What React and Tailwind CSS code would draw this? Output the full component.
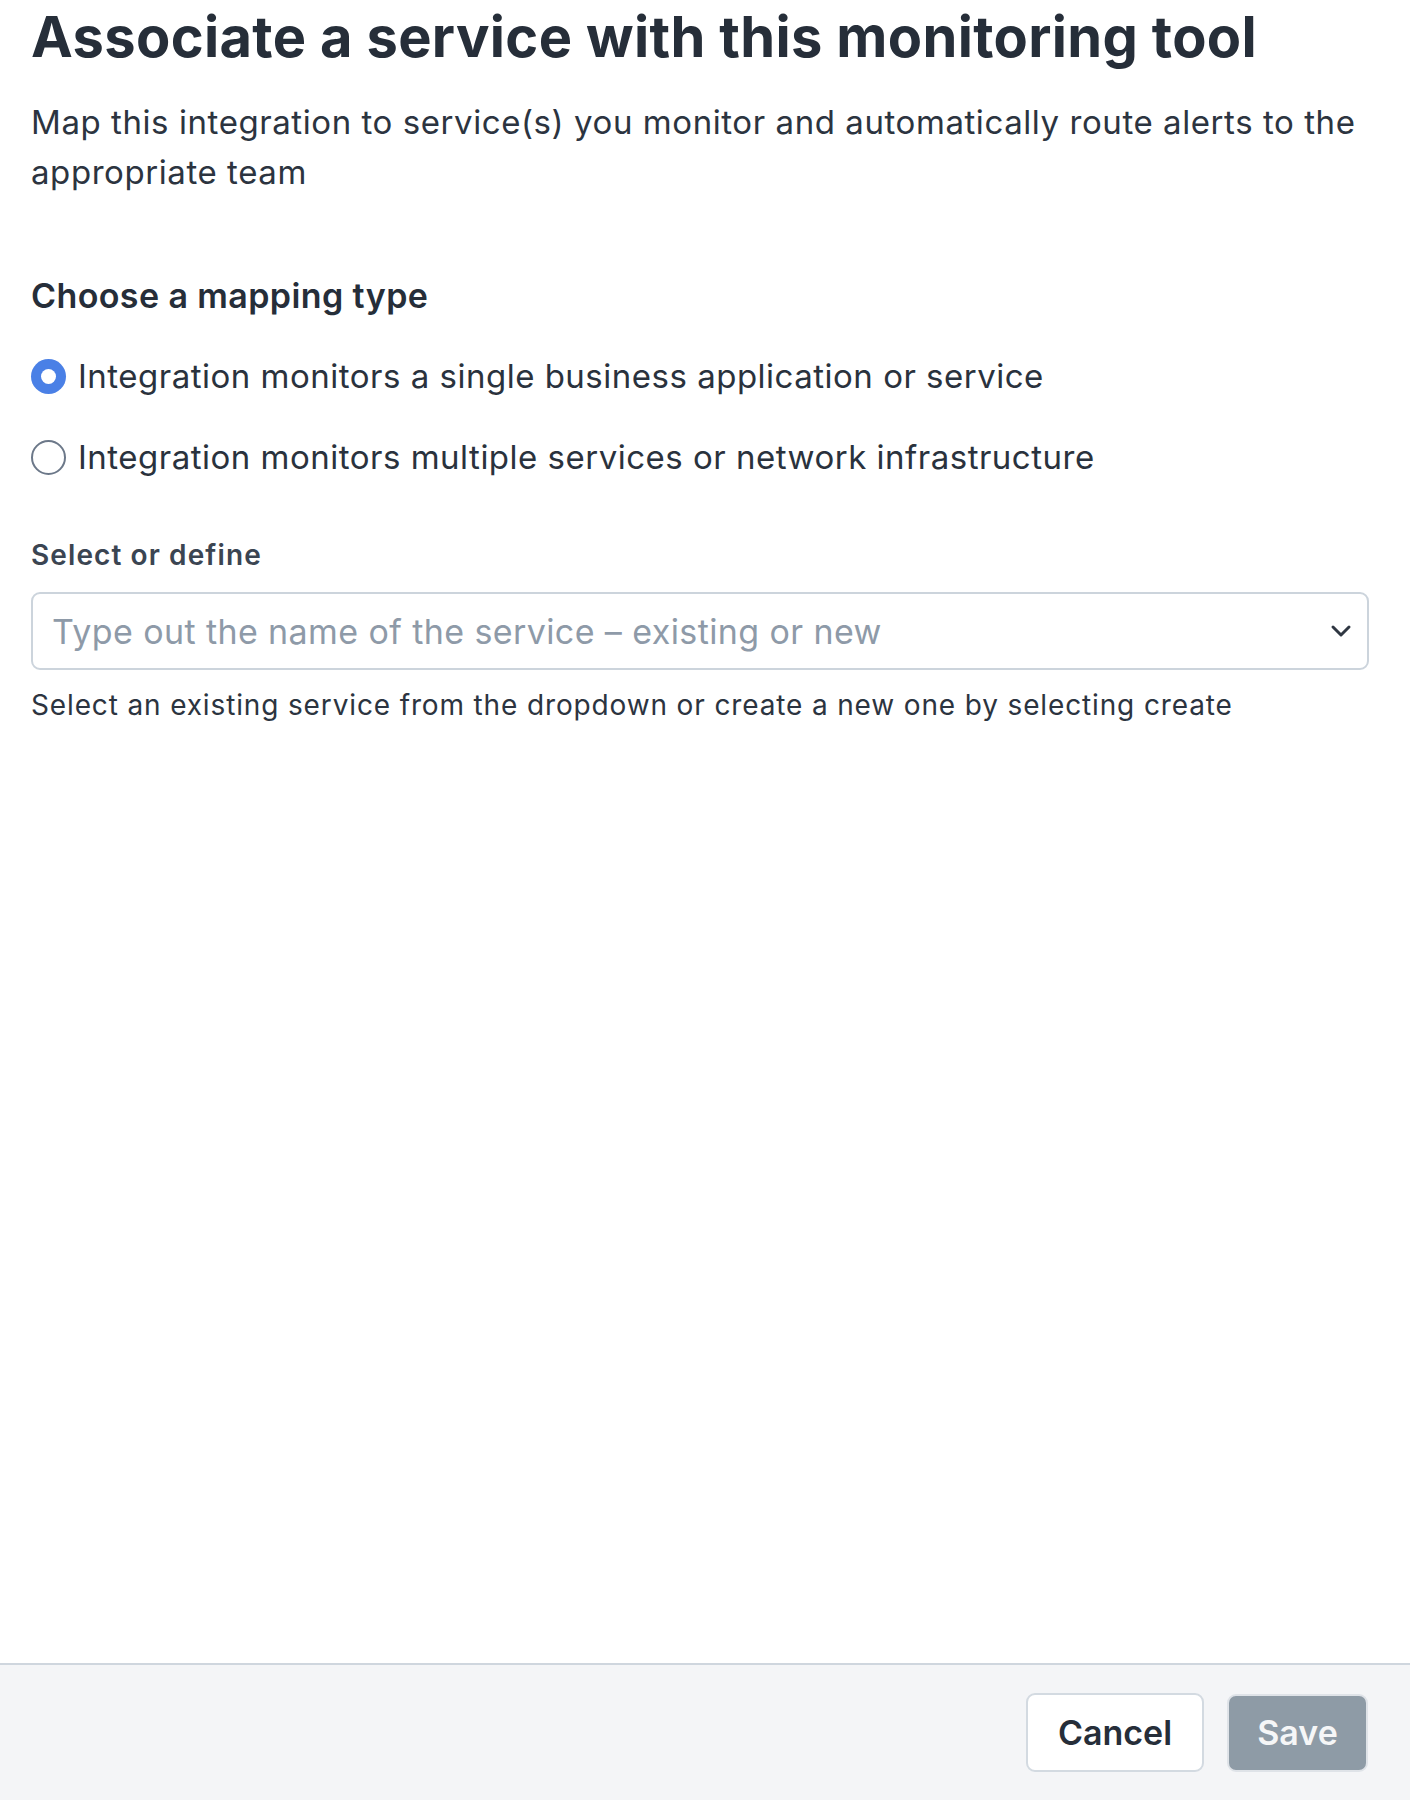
import React, { useState } from 'react';

const OPTIONS = [
  { key: 'single', label: 'Integration monitors a single business application or service' },
  { key: 'multiple', label: 'Integration monitors multiple services or network infrastructure' },
];

function Radio({ checked }) {
  return checked ? (
    <span className="w-[35px] h-[35px] rounded-full bg-[#4a80e6] flex items-center justify-center flex-shrink-0">
      <span className="w-[15px] h-[15px] rounded-full bg-white" />
    </span>
  ) : (
    <span className="w-[35px] h-[35px] rounded-full border-2 border-[#6c7889] bg-white flex-shrink-0" />
  );
}

export default function App() {
  const [mapping, setMapping] = useState('single');

  return (
    <div className="w-full h-[1800px] flex flex-col bg-white text-[#2a323d]" style={{ fontFamily: 'Inter, "Noto Sans", sans-serif' }}>
      <div className="flex-1 pl-[31px] pr-[41px] pt-[4px]">
        <h1 className="text-[56px] leading-[66px] font-bold text-[#262e39] tracking-[0.35px]">
          Associate a service with this monitoring tool
        </h1>
        <p className="mt-[27px] text-[33px] leading-[50px] text-[#2c3440] tracking-[0.57px]">
          Map this integration to service(s) you monitor and automatically route alerts to the appropriate team
        </p>

        <h2 className="mt-[79px] text-[34px] leading-[40px] font-semibold text-[#262e39] tracking-[0.4px]">
          Choose a mapping type
        </h2>

        <div className="mt-[40px] flex flex-col gap-[41px]">
          {OPTIONS.map(opt => (
            <label
              key={opt.key}
              className="flex items-center gap-[12px] h-[40px] cursor-pointer"
              onClick={() => setMapping(opt.key)}
            >
              <Radio checked={mapping === opt.key} />
              <span className="text-[33px] leading-[40px] text-[#2a323d] tracking-[0.5px]">{opt.label}</span>
            </label>
          ))}
        </div>

        <div className="mt-[60px] text-[28px] leading-[36px] font-semibold text-[#3b4552] tracking-[1.1px]">
          Select or define
        </div>
        <div className="mt-[19px] h-[78px] border-2 border-[#ccd4dc] rounded-[9px] flex items-center pl-[19px] pr-[15px]">
          <span className="flex-1 text-[34px] text-[#8e9aa8] tracking-[0.4px]">
            Type out the name of the service – existing or new
          </span>
          <svg width="22" height="14" viewBox="0 0 22 14" fill="none" stroke="#2f3742" strokeWidth="3" strokeLinecap="round" strokeLinejoin="round">
            <path d="M3 3l8 8 8-8" />
          </svg>
        </div>
        <p className="mt-[17px] text-[28px] leading-[36px] text-[#2c3440] tracking-[0.86px]">
          Select an existing service from the dropdown or create a new one by selecting create
        </p>
      </div>

      <div className="h-[137px] border-t-2 border-[#cfd6de] bg-[#f4f5f7] flex items-center justify-end gap-[23px] pr-[42px]">
        <button className="w-[178px] h-[79px] rounded-[9px] bg-white border-2 border-[#d3dae1] text-[34px] font-semibold text-[#262e39]">
          Cancel
        </button>
        <button className="w-[141px] h-[78px] rounded-[9px] bg-[#8e9ba6] border-2 border-[#dfe3e8] text-[34px] font-semibold text-[#f5f6f7]">
          Save
        </button>
      </div>
    </div>
  );
}
